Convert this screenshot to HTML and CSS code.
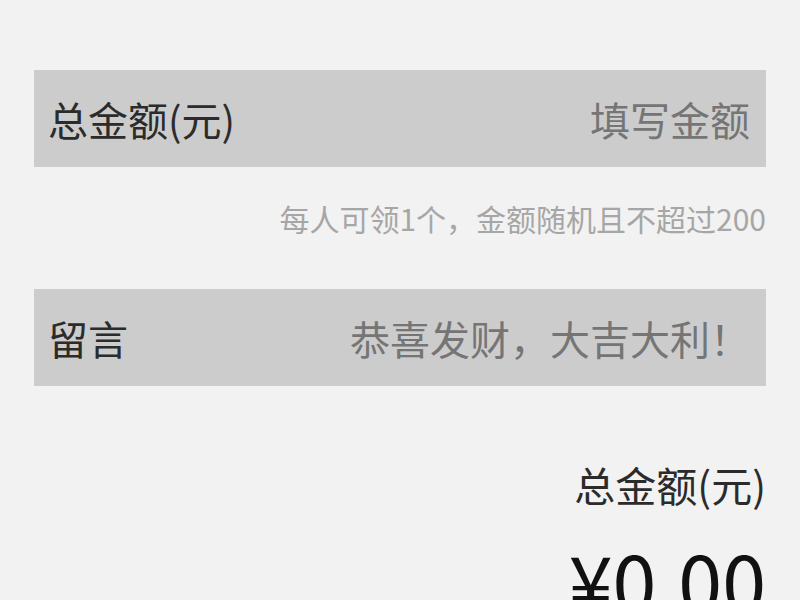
FILE: index.html
```html
<!DOCTYPE html>
<html lang="zh">
<head>
<meta charset="utf-8">
<link rel="stylesheet" href="styles.css">
</head>
<body>
<div class="page">
  <div class="row">
    <span class="label">总金额(元)</span>
    <span class="placeholder">填写金额</span>
  </div>
  <div class="hint">每人可领1个，金额随机且不超过200</div>
  <div class="row row-msg">
    <span class="label">留言</span>
    <span class="placeholder">恭喜发财，大吉大利！</span>
  </div>
  <div class="total-label">总金额(元)</div>
  <div class="total-amount">¥0.00</div>
</div>
</body>
</html>
```
FILE: styles.css
```css
html, body {
  margin: 0;
  padding: 0;
  background: #f2f2f2;
  font-family: "Noto Sans CJK SC", "Noto Sans", sans-serif;
  overflow: hidden;
}
.page {
  padding: 70px 34px 0;
  display: flex;
  flex-direction: column;
}
.row {
  height: 97px;
  background: #cccccc;
  display: flex;
  align-items: center;
  justify-content: space-between;
  padding: 0 16px 0 14px;
}
.label {
  font-size: 40px;
  color: #2b2b2b;
}
.placeholder {
  font-size: 40px;
  color: #757575;
}
.hint {
  margin-top: 31px;
  line-height: 40px;
  font-size: 30px;
  color: #a6a6a6;
  text-align: right;
}
.row-msg {
  margin-top: 51px;
}
.total-label {
  margin-top: 72px;
  line-height: 52px;
  font-size: 41px;
  color: #2b2b2b;
  text-align: right;
}
.total-amount {
  margin-top: 25px;
  font-size: 79px;
  line-height: 90px;
  color: #111;
  text-align: right;
}
```
